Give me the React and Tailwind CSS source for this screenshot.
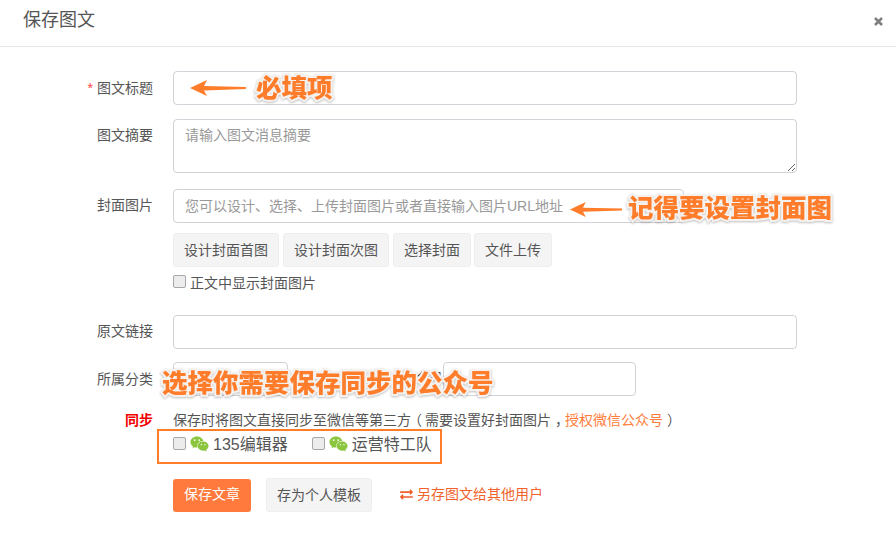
import React from "react";
import { FaWeixin, FaExchangeAlt } from "react-icons/fa";

const font = "[font-family:'Liberation_Sans','Noto_Sans_CJK_SC',sans-serif]";
const inputCls = "h-[34px] rounded-[4px] border border-[#d2d2d8] bg-white px-[11px] text-[14px] text-[#555] outline-none placeholder:text-[#999]";
const btnCls = "h-[34px] rounded-[3px] border border-[#eeeeee] bg-[#f4f4f4] px-[10px] text-[14px] leading-[32px] text-[#555]";
const noteCls = "absolute whitespace-nowrap text-[25.5px] leading-[30px] font-black text-[#ff7d2a] [-webkit-text-stroke:4px_#f4f1ee] [paint-order:stroke_fill] [filter:drop-shadow(0_1px_1px_rgba(0,0,0,0.25))]";

function Label({ children, className = "" }) {
  return <div className={"h-[34px] w-[153px] shrink-0 text-right text-[14px] leading-[32px] text-[#555] " + className}>{children}</div>;
}

function Arrow({ className }) {
  return (
    <svg className={className} viewBox="0 0 56 16" fill="#ff7d2a">
      <path d="M0 8 L17 0 L14 6 L56 7 L56 9 L14 10.5 L17 16 Z" />
    </svg>
  );
}

function Check({ className = "" }) {
  return <input type="checkbox" className={"m-0 h-[13px] w-[13px] shrink-0 appearance-none rounded-[2px] border border-[#a8a8a8] bg-[#ececec] " + className} />;
}

function Account({ name }) {
  return (
    <div className="flex items-center">
      <Check className="mb-[4px]" />
      <FaWeixin className="mb-[2px] ml-[4px] h-[20px] w-[19px] text-[#8cc63f]" />
      <span className="ml-[4px] text-[16px] leading-[22px] text-[#555]">{name}</span>
    </div>
  );
}

export default function App() {
  return (
    <div className={"h-[534px] w-[896px] overflow-hidden bg-white " + font}>
      <header className="flex h-[47px] items-center justify-between border-b border-[#e5e5e8] pl-[23px] pr-[13px]">
        <h2 className="pb-[6px] text-[18px] leading-[28px] font-normal text-[#555]">保存图文</h2>
        <svg className="mb-[4px] h-[9px] w-[9px]" viewBox="0 0 9 9" stroke="#808080" strokeWidth="2.6">
          <path d="M1 1 L8 8 M8 1 L1 8" />
        </svg>
      </header>

      <form className="flex flex-col pt-[24px]">
        <div className="relative flex gap-[20px]">
          <Label className="leading-[34px]"><span className="mr-[4px] text-[#f44]">*</span>图文标题</Label>
          <input className={inputCls + " w-[624px]"} />
          <Arrow className="absolute left-[190px] top-[9px] h-[16px] w-[56px]" />
          <span className={noteCls + " left-[256px] top-[2px]"}>必填项</span>
        </div>

        <div className="mt-[14px] flex gap-[20px]">
          <Label>图文摘要</Label>
          <textarea className={inputCls + " h-[54px] w-[624px] resize-y py-[5px] leading-[20px]"} placeholder="请输入图文消息摘要" />
        </div>

        <div className="relative mt-[16px] flex gap-[20px]">
          <Label className="leading-[28px]">封面图片</Label>
          <input className={inputCls + " w-[511px]"} placeholder="您可以设计、选择、上传封面图片或者直接输入图片URL地址" />
          <Arrow className="absolute left-[570px] top-[13px] h-[15px] w-[52px]" />
          <span className={noteCls + " left-[628px] top-[4px]"}>记得要设置封面图</span>
        </div>

        <div className="mt-[10px] ml-[173px] flex">
          <div className={btnCls}>设计封面首图</div>
          <div className={btnCls + " ml-[4px]"}>设计封面次图</div>
          <div className={btnCls + " ml-[4px]"}>选择封面</div>
          <div className={btnCls + " ml-[3px] border-[#e4e4e8]"}>文件上传</div>
        </div>

        <label className="mt-[6px] ml-[173px] flex h-[20px] items-center gap-[4px] text-[14px] text-[#555]">
          <Check className="mb-[3px]" />
          正文中显示封面图片
        </label>

        <div className="mt-[22px] flex gap-[20px]">
          <Label>原文链接</Label>
          <input className={inputCls + " w-[624px]"} />
        </div>

        <div className="relative mt-[13px] flex gap-[20px]">
          <Label className="leading-[34px]">所属分类</Label>
          <div className={inputCls + " w-[115px]"} />
          <div className="ml-[-20px] w-[155px] text-right text-[14px] leading-[32px] text-[#555]">公众号</div>
          <div className={inputCls + " ml-[-20px] w-[193px]"} />
          <span className={noteCls + " left-[162px] top-[6px]"}>选择你需要保存同步的公众号</span>
        </div>

        <div className="mt-[15px] flex gap-[20px]">
          <div className="w-[153px] shrink-0 text-right text-[14px] leading-[18px] font-bold text-[#f00000]">同步</div>
          <div className="text-[14px] leading-[18px] text-[#555]">
            保存时将图文直接同步至微信等第三方<span className="inline-block -translate-x-[3px]">（</span>需要设置好封面图片<span className="inline-block translate-x-[4px]">，</span><span className="text-[#ff7d3c]">授权微信公众号</span><span className="inline-block translate-x-[4px]">）</span>
          </div>
        </div>

        <div className="ml-[157px] flex h-[35px] w-[285px] items-center gap-[24px] border-2 border-[#ff7d2a] pb-[3px] pl-[14px]">
          <Account name="135编辑器" />
          <Account name="运营特工队" />
        </div>

        <div className="mt-[14px] ml-[173px] flex items-center">
          <div className="h-[33px] w-[78px] rounded-[3px] bg-[#ff7a3c] text-center text-[14px] leading-[31px] text-white">保存文章</div>
          <div className={btnCls + " ml-[15px] h-[33px] w-[106px] text-center leading-[29px]"}>存为个人模板</div>
          <div className="ml-[28px] mb-[1px] flex items-center gap-[4px] text-[14px] text-[#f0622c]">
            <FaExchangeAlt className="h-[13px] w-[13px]" />
            另存图文给其他用户
          </div>
        </div>
      </form>
    </div>
  );
}
